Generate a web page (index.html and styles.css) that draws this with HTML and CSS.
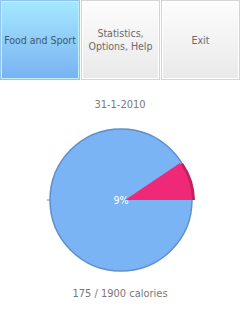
FILE: index.html
```html
<!DOCTYPE html>
<html lang="en">
<head>
    <meta charset="UTF-8">
    <title>Calories</title>
    <link rel="stylesheet" href="styles.css">
</head>
<body>
    <div class="menu">
        <div class="tab active">Food and Sport</div>
        <div class="tab">Statistics,<br>Options, Help</div>
        <div class="tab">Exit</div>
    </div>
    <p class="date">31-1-2010</p>
    <svg class="pie" width="240" height="175" viewBox="0 0 240 175">
        <circle cx="121" cy="88" r="71" fill="#7ab4f4" stroke="#5f8fcb" stroke-width="1.5"/>
        <line x1="47" y1="88" x2="50" y2="88" stroke="#5f8fcb" stroke-width="1"/>
        <path d="M128,88 L195,88 A67,67 0 0,0 183,51 Z" fill="#c0215e"/>
        <path d="M125,88 L192,88 A67,67 0 0,0 180,51 Z" fill="#f02878"/>
        <text x="121" y="92" class="pct">9%</text>
    </svg>
    <p class="total">175 / 1900 calories</p>
</body>
</html>
```

FILE: styles.css
```css
body {
    margin: 0;
    background-color: white;
    font-family: "DejaVu Sans Condensed", "DejaVu Sans", sans-serif;
}

.menu {
    display: grid;
    grid-template-columns: 80px 79px 79px;
    gap: 1px;
    height: 80px;
}

.tab {
    display: flex;
    align-items: center;
    justify-content: center;
    text-align: center;
    font-size: 10.5px;
    line-height: 13px;
    color: #6a6a6a;
    border: 1px solid #d4d4d4;
    box-shadow: inset 0 0 0 1px white;
    background: linear-gradient(#fdfdfd, #e9e9e9);
    box-sizing: border-box;
}

.tab.active {
    color: #3e5870;
    border-color: #8ec6ee;
    box-shadow: inset 0 0 0 1px #bdeeff;
    background: linear-gradient(#a6e8fe, #78b2f2);
}

.date {
    margin: 18px 0 0;
    line-height: 14px;
    font-size: 11px;
    color: #7a7a7a;
    text-align: center;
}

.pie {
    display: block;
}

.pct {
    font-size: 10.5px;
    fill: white;
    text-anchor: middle;
    font-family: "DejaVu Sans Condensed", "DejaVu Sans", sans-serif;
}

.total {
    margin: 0;
    line-height: 14px;
    font-size: 11px;
    color: #777777;
    text-align: center;
}
```
